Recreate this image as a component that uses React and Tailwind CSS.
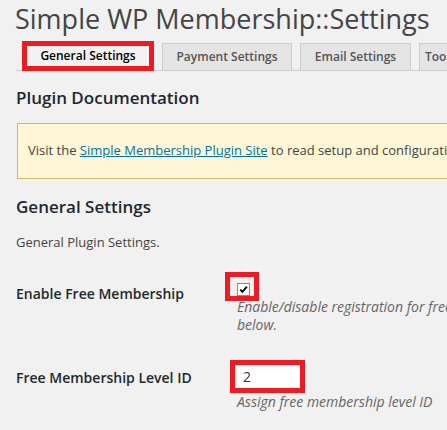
import React from 'react';

const font = "font-['Open_Sans',sans-serif]";

function Tab({ label, width, align = 'justify-center' }) {
  return (
    <div
      className={`${width} ${align} h-[27px] ml-[8px] shrink-0 flex items-center bg-[#e4e4e4] border border-b-0 border-[#ccc] text-[12px] font-semibold text-[#555] leading-[20px]`}
    >
      {label}
    </div>
  );
}

export default function App() {
  return (
    <div className={`${font} w-[447px] h-[430px] overflow-hidden bg-[#f1f1f1] text-[#444]`}>
      <div className="w-[800px] pl-[16px]">
        <h1 className="text-[27px] leading-[36px] pt-[1px] -ml-px text-[#444] font-normal">
          Simple WP Membership::Settings
        </h1>

        <div className="mt-[4px] h-[30px] flex items-end border-b border-[#ccc]">
          <div className="ml-[6px] w-[132px] h-[30px] -mb-px shrink-0 flex items-center justify-center border-[5px] border-[#ed1c24] bg-[#f1f1f1] text-[12px] font-semibold text-[#000] leading-[20px]">
            General Settings
          </div>
          <Tab label="Payment Settings" width="w-[130px]" />
          <Tab label="Email Settings" width="w-[111px]" />
          <Tab label="Tools" width="w-[80px]" align="justify-start pl-[5px]" />
        </div>

        <h2 className="mt-[15px] text-[17px] leading-[23px] font-semibold text-[#23282d]">
          Plugin Documentation
        </h2>

        <div className="mt-[14px] ml-px h-[56px] pt-[16px] px-[10px] bg-[#fff6d5] border border-[#d4ba66] text-[13px] leading-[20px] text-[#444] whitespace-nowrap">
          Visit the{' '}
          <a href="#" className="text-[#0073aa] underline">
            Simple Membership Plugin Site
          </a>{' '}
          to read setup and configuration documentation.
        </div>

        <h2 className="mt-[16px] text-[17px] leading-[23px] font-semibold text-[#23282d]">
          General Settings
        </h2>

        <p className="mt-[15px] text-[13px] leading-[18px] text-[#444]">General Plugin Settings.</p>

        <div className="mt-[32px] flex items-start">
          <div className="w-[221px] shrink-0 mt-px text-[14px] leading-[20px] font-semibold text-[#23282d]">
            Enable Free Membership
          </div>
          <div className="flex flex-col">
            <div className="relative w-[13px] h-[13px] bg-white border border-[#8c8c8c]">
              <svg viewBox="0 0 11 11" className="absolute inset-0 w-[11px] h-[11px]">
                <path d="M2.2 5.6 L4.4 7.8 L8.9 2.6" fill="none" stroke="#111" strokeWidth="2" />
              </svg>
              <div className="absolute -left-[13px] -top-[12px] w-[34px] h-[29px] border-[5px] border-[#ed1c24]" />
            </div>
            <div className="mt-[2px] text-[14px] leading-[18px] italic text-[#666] whitespace-nowrap">
              <div>Enable/disable registration for free membership level. When you enable this option, make sure to specify a free membership level ID in the field</div>
              <div>below.</div>
            </div>
          </div>
        </div>

        <div className="mt-[26px] flex items-start">
          <div className="w-[221px] shrink-0 mt-[8px] text-[14px] leading-[20px] font-semibold text-[#23282d]">
            Free Membership Level ID
          </div>
          <div className="flex flex-col">
            <div className="-ml-[7px] w-[75px] h-[33px] border-[5px] border-[#ed1c24] bg-white shadow-[inset_2px_1px_2px_rgba(0,0,0,0.08)] pl-[8px] flex items-center text-[14px] leading-[20px] text-[#32373c]">
              2
            </div>
            <div className="text-[14px] leading-[18px] italic text-[#666] whitespace-nowrap">
              Assign free membership level ID
            </div>
          </div>
        </div>
      </div>
    </div>
  );
}
